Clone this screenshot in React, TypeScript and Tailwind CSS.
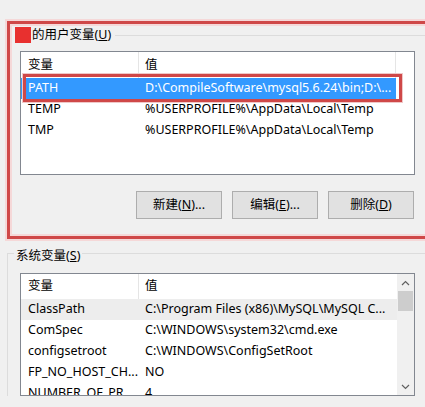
import React from "react";

interface Row {
  name: string;
  value: string;
}

const userRows: Row[] = [
  { name: "PATH", value: "D:\\CompileSoftware\\mysql5.6.24\\bin;D:\\..." },
  { name: "TEMP", value: "%USERPROFILE%\\AppData\\Local\\Temp" },
  { name: "TMP", value: "%USERPROFILE%\\AppData\\Local\\Temp" },
];

const sysRows: Row[] = [
  { name: "ClassPath", value: "C:\\Program Files (x86)\\MySQL\\MySQL C..." },
  { name: "ComSpec", value: "C:\\WINDOWS\\system32\\cmd.exe" },
  { name: "configsetroot", value: "C:\\WINDOWS\\ConfigSetRoot" },
  { name: "FP_NO_HOST_CH...", value: "NO" },
  { name: "NUMBER_OF_PR...", value: "4" },
];

const Chevron = ({ up }: { up?: boolean }) => (
  <svg width="9" height="6" viewBox="0 0 9 6" className="block">
    <path
      d={up ? "M1 5L4.5 1.5L8 5" : "M1 1L4.5 4.5L8 1"}
      fill="none"
      stroke="#606060"
      strokeWidth="1.2"
    />
  </svg>
);

const Btn = ({ label, k, dots }: { label: string; k: string; dots?: boolean }) => (
  <button className="w-[86px] h-[28px] bg-[#e1e1e1] border border-[#adadad] flex items-center justify-center text-[12.5px] text-black">
    {label}(<span className="underline">{k}</span>){dots ? "..." : ""}
  </button>
);

export default function App() {
  return (
    <div className="w-[425px] h-[407px] overflow-hidden bg-[#f0f0f0] text-[12.5px] text-black font-['Noto_Sans','Noto_Sans_CJK_SC',sans-serif] leading-none">
      <div className="pt-[21px] pl-[7px]">
        {/* red annotation frame around the user group */}
        <div className="w-[430px] h-[218px] border-[3px] border-[#cf4848] shadow-[0_0_0_2px_#f5d8d8,inset_0_0_0_2px_#f5d8d8] flex flex-col">
          <div className="h-[16px] mt-[3px] ml-[5px] flex items-center">
            <div className="w-[16px] h-[16px] bg-[#e8302f]" />
            <span className="ml-[1px]">
              的用户变量(<span className="underline">U</span>)
            </span>
            <div className="flex-1 h-px bg-[#dcdcdc] ml-[4px] mt-[1px]" />
          </div>

          <div className="ml-[10px] mt-[8px] w-[395px] h-[124px] border border-[#828790] bg-white relative">
            <div className="h-[26px] flex items-center">
              <div className="w-[118px] h-full pl-[7px] flex items-center border-r border-[#e5e5e5]">变量</div>
              <div className="w-[257px] h-full pl-[6px] flex items-center border-r border-[#e5e5e5]">值</div>
            </div>
            {userRows.map((r, i) => (
              <div
                key={r.name}
                className={
                  "h-[21px] w-[375px] flex items-center " +
                  (i === 0 ? "bg-[#3399ff] text-white" : "")
                }
              >
                <div className="w-[118px] pl-[7px] whitespace-nowrap">{r.name}</div>
                <div className="pl-[6px] whitespace-nowrap">{r.value}</div>
              </div>
            ))}
            <div className="absolute left-[2px] top-[22px] w-[379px] h-[28px] border-[3px] border-[#cf4848] shadow-[0_0_0_1px_#f0c8c8]" />
          </div>

          <div className="ml-[126px] mt-[16px] flex gap-[10px]">
            <Btn label="新建" k="N" dots />
            <Btn label="编辑" k="E" dots />
            <Btn label="删除" k="D" />
          </div>
        </div>

        {/* system variables group */}
        <div className="mt-[14px] w-[425px] border-l border-t border-[#dcdcdc]">
          <div className="-mt-[7px] ml-[6px] w-fit px-[2px] h-[18px] flex items-center bg-[#f0f0f0]">
            系统变量(<span className="underline">S</span>)
          </div>
          <div className="ml-[12px] mt-[8px] w-[395px] h-[123px] border border-[#828790] bg-white flex">
            <div className="flex-1 overflow-hidden">
              <div className="h-[25px] flex items-center">
                <div className="w-[118px] h-full pl-[7px] flex items-center border-r border-[#e5e5e5]">变量</div>
                <div className="pl-[6px]">值</div>
              </div>
              {sysRows.map((r, i) => (
                <div
                  key={r.name}
                  className={"h-[21px] flex items-center " + (i === 0 ? "bg-[#ededed]" : "")}
                >
                  <div className="w-[118px] pl-[7px] whitespace-nowrap">{r.name}</div>
                  <div className="pl-[6px] whitespace-nowrap">{r.value}</div>
                </div>
              ))}
            </div>
            <div className="w-[17px] h-full bg-[#f0f0f0] flex flex-col">
              <div className="h-[17px] flex items-center justify-center">
                <Chevron up />
              </div>
              <div className="mx-[1px] h-[20px] bg-[#cdcdcd]" />
              <div className="flex-1" />
              <div className="h-[17px] flex items-center justify-center">
                <Chevron />
              </div>
            </div>
          </div>
        </div>
      </div>
    </div>
  );
}
